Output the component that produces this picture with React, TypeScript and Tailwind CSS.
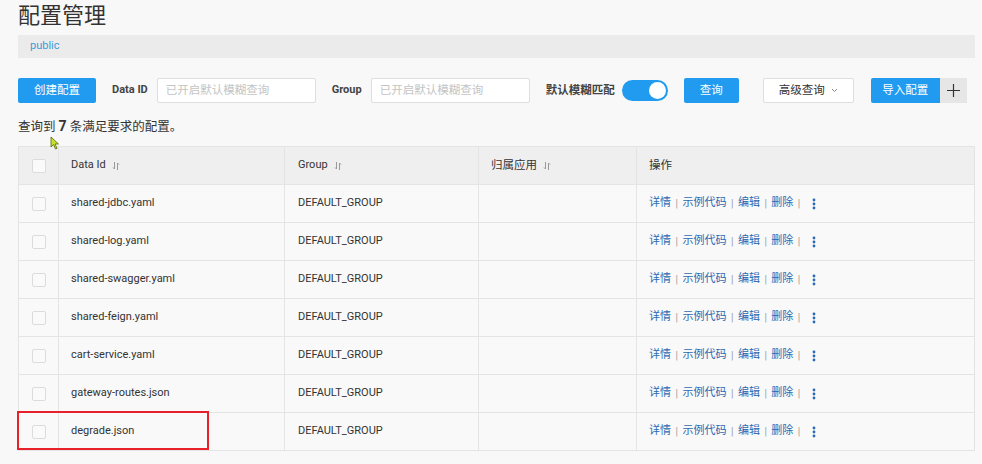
import React from "react";

const rows = [
  "shared-jdbc.yaml",
  "shared-log.yaml",
  "shared-swagger.yaml",
  "shared-feign.yaml",
  "cart-service.yaml",
  "gateway-routes.json",
  "degrade.json",
];

const font = { fontFamily: 'Roboto, "Noto Sans CJK SC", sans-serif' };

function SortIcon() {
  return (
    <svg width="8" height="10" viewBox="0 0 8 10" className="ml-[6px] inline-block">
      <path d="M2.5 1 V8 M1 6.5 L2.5 8" stroke="#999" strokeWidth="1" fill="none" />
      <path d="M5.5 9 V2 M7 3.5 L5.5 2" stroke="#999" strokeWidth="1" fill="none" />
    </svg>
  );
}

function Checkbox() {
  return <div className="w-[14px] h-[14px] border border-[#dcdcdc] rounded-[2px] bg-[#fafafa]" />;
}

function Actions() {
  const sep = <span className="text-[#999] mx-[4.5px] text-[10px]">|</span>;
  return (
    <div className="flex items-center text-[#2b69b3] text-[11px]">
      <span>详情</span>
      {sep}
      <span>示例代码</span>
      {sep}
      <span>编辑</span>
      {sep}
      <span>删除</span>
      {sep}
      <svg width="4" height="12" viewBox="0 0 4 12" className="ml-[7px]">
        <circle cx="2" cy="2" r="1.4" fill="#2b69b3" />
        <circle cx="2" cy="6" r="1.4" fill="#2b69b3" />
        <circle cx="2" cy="10" r="1.4" fill="#2b69b3" />
      </svg>
    </div>
  );
}

export default function App() {
  return (
    <div className="w-[982px] h-[464px] bg-[#f8f8f8] overflow-hidden relative text-[#333]" style={font}>
      <div className="pl-[18px] pr-[7px]">
        <div className="h-[33px] pt-[2px] text-[22px] leading-[28px] text-[#333]">配置管理</div>
        <div className="mt-[2px] h-[23px] bg-[#ebebeb] flex items-center pl-[12px] text-[11px] text-[#3d9ad6]">
          public
        </div>
        <div className="mt-[20px] h-[25px] flex items-center">
          <div className="w-[78px] h-[25px] bg-[#209bf0] rounded-[2px] text-white text-[11.5px] flex items-center justify-center">
            创建配置
          </div>
          <div className="ml-[16px] text-[11px] font-bold text-[#444]">Data ID</div>
          <div className="ml-[9px] w-[159px] h-[25px] border border-[#dedede] bg-white rounded-[2px] flex items-center px-[8px] text-[11.5px] text-[#c4c4c4]">
            已开启默认模糊查询
          </div>
          <div className="ml-[16px] text-[11px] font-bold text-[#444]">Group</div>
          <div className="ml-[9px] w-[159px] h-[25px] border border-[#dedede] bg-white rounded-[2px] flex items-center px-[8px] text-[11.5px] text-[#c4c4c4]">
            已开启默认模糊查询
          </div>
          <div className="ml-[16px] text-[11.5px] font-bold text-[#444]">默认模糊匹配</div>
          <div className="ml-[7px] w-[46px] h-[21px] rounded-full bg-[#209bf0] relative">
            <div className="absolute right-[2px] top-[2px] w-[17px] h-[17px] rounded-full bg-white" />
          </div>
          <div className="ml-[16px] w-[55px] h-[25px] bg-[#209bf0] rounded-[2px] text-white text-[11.5px] flex items-center justify-center">
            查询
          </div>
          <div className="ml-[24px] w-[91px] h-[25px] border border-[#dedede] bg-white rounded-[2px] text-[11.5px] text-[#333] flex items-center justify-center">
            高级查询
            <svg width="7" height="5" viewBox="0 0 7 5" className="ml-[6px]">
              <path d="M1 1 L3.5 3.5 L6 1" stroke="#888" strokeWidth="1" fill="none" />
            </svg>
          </div>
          <div className="ml-[17px] w-[69px] h-[25px] bg-[#209bf0] rounded-l-[2px] text-white text-[11.5px] flex items-center justify-center">
            导入配置
          </div>
          <div className="w-[27px] h-[25px] bg-[#e6e6e6] flex items-center justify-center">
            <svg width="13" height="13" viewBox="0 0 13 13">
              <path d="M6.5 0 V13 M0 6.5 H13" stroke="#333" strokeWidth="1.2" />
            </svg>
          </div>
        </div>
        <div className="mt-[14px] text-[12.5px] leading-[18px] text-[#333]">
          查询到 <span className="font-bold text-[14px]">7</span> 条满足要求的配置。
        </div>
        <div className="mt-[10px] w-[957px] border border-[#e4e4e4] text-[11px]">
          <div className="flex h-[37px] bg-[#efefef] text-[#333]">
            <div className="w-[40px] flex items-center justify-center border-r border-[#e4e4e4]">
              <Checkbox />
            </div>
            <div className="w-[226px] flex items-center pl-[12px] border-r border-[#e4e4e4]">
              Data Id<SortIcon />
            </div>
            <div className="w-[194px] flex items-center pl-[13px] border-r border-[#e4e4e4]">
              Group<SortIcon />
            </div>
            <div className="w-[158px] flex items-center pl-[12px] border-r border-[#e4e4e4] text-[11.5px]">
              归属应用<SortIcon />
            </div>
            <div className="flex-1 flex items-center pl-[12px] text-[11.5px]">操作</div>
          </div>
          {rows.map((r) => (
            <div key={r} className="flex h-[38px] border-t border-[#e4e4e4] bg-[#f9f9f9] text-[#333]">
              <div className="w-[40px] flex items-center justify-center border-r border-[#e4e4e4]">
                <Checkbox />
              </div>
              <div className="w-[226px] flex items-center pl-[12px] border-r border-[#e4e4e4]">{r}</div>
              <div className="w-[194px] flex items-center pl-[13px] border-r border-[#e4e4e4]">DEFAULT_GROUP</div>
              <div className="w-[158px] border-r border-[#e4e4e4]" />
              <div className="flex-1 flex items-center pl-[12px]">
                <Actions />
              </div>
            </div>
          ))}
        </div>
      </div>
      <div className="absolute left-[17px] top-[411px] w-[192px] h-[39px] border-2 border-[#e8202a]" />
      <svg width="10" height="14" viewBox="0 0 10 14" className="absolute left-[50px] top-[136px]">
        <path d="M1 1 L1 11 L3.5 8.5 L5.5 13 L7 12.3 L5 8 L8.5 8 Z" fill="#c8e030" stroke="#556600" strokeWidth="0.8" />
      </svg>
    </div>
  );
}
